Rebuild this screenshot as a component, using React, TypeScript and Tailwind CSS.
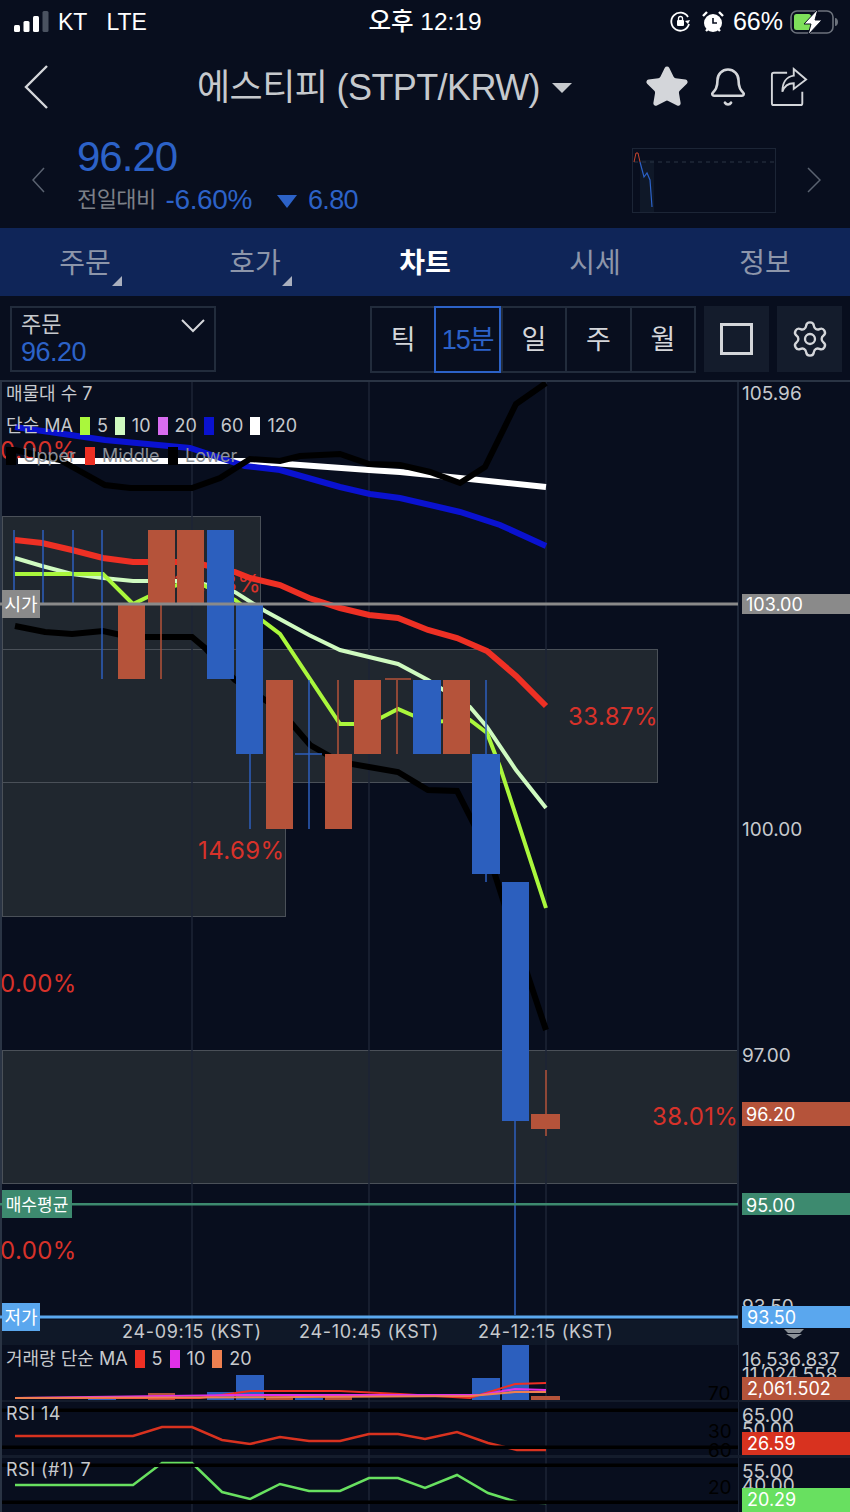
import { Bell, Settings, Star } from "lucide-react";

const BLUE = "#2c5fbe";
const RED = "#b5533a";

const tabs = ["주문", "호가", "차트", "시세", "정보"];
const periods = ["틱", "15분", "일", "주", "월"];

// [left, right, top, bottom, color]
const bodies: [number, number, number, number, string][] = [
    [118, 145, 604, 679, RED],
    [148, 175, 530, 604, RED],
    [177, 204, 530, 604, RED],
    [207, 234, 530, 679, BLUE],
    [236, 263, 604, 754, BLUE],
    [266, 293, 680, 829, RED],
    [325, 352, 754, 829, RED],
    [354, 381, 680, 754, RED],
    [413, 441, 680, 754, BLUE],
    [443, 470, 680, 754, RED],
    [472, 500, 754, 874, BLUE],
    [502, 529, 882, 1121, BLUE],
    [531, 560, 1114, 1129, RED],
];

// [x, top, bottom, color]
const wicks: [number, number, number, string][] = [
    [14, 530, 604, BLUE],
    [43, 530, 604, BLUE],
    [73, 530, 604, BLUE],
    [102, 530, 679, BLUE],
    [161, 604, 679, RED],
    [250, 754, 829, BLUE],
    [309, 680, 829, BLUE],
    [338, 680, 754, RED],
    [397, 680, 754, RED],
    [486, 680, 754, BLUE],
    [486, 874, 882, BLUE],
    [515, 1121, 1315, BLUE],
    [546, 1070, 1136, RED],
];

const volBars: [number, number, number, string][] = [
    [88, 116, 1396, BLUE],
    [148, 175, 1393, RED],
    [207, 234, 1392, BLUE],
    [236, 264, 1375, BLUE],
    [266, 293, 1398, RED],
    [295, 323, 1398, BLUE],
    [325, 352, 1397, RED],
    [472, 500, 1378, BLUE],
    [502, 529, 1345, BLUE],
    [531, 560, 1396, RED],
];

const lines = {
    white: "18,461 245,461 300,465 369,470 400,472 460,478 546,487",
    blue: "15,427 105,440 190,448 245,466 280,470 340,487 370,494 400,498 460,512 500,525 546,546",
    upper: "15,450 60,460 105,485 130,488 192,488 220,478 250,459 280,461 300,456 340,454 369,464 400,465 430,472 460,483 485,467 516,404 546,383",
    middle: "15,540 42,543 72,550 103,558 133,562 192,562 235,572 250,578 280,585 309,598 340,608 369,615 398,618 428,630 457,638 487,651 516,676 546,706",
    ma10: "15,558 42,566 72,574 103,578 133,581 192,581 235,592 265,611 309,635 340,650 369,657 398,664 428,680 470,707 487,727 516,770 546,808",
    ma5: "15,574 103,574 133,604 162,590 192,580 235,600 280,634 340,724 369,724 398,709 428,722 470,720 487,733 500,767 546,908",
    lower: "15,626 45,632 72,634 103,631 130,637 192,637 205,648 235,680 280,710 310,745 340,762 369,767 398,772 428,790 457,791 487,850 516,940 546,1030",
    volRed: "15,1398 200,1398 250,1391 340,1391 400,1394 470,1398 515,1384 546,1383",
    volPink: "15,1398 240,1395 480,1395 515,1389 546,1390",
    volOrange: "15,1398 300,1397 470,1396 515,1392 546,1392",
    rsi: "15,1436 133,1436 162,1427 192,1427 222,1440 250,1444 280,1437 309,1441 340,1441 369,1434 398,1434 425,1439 457,1432 488,1443 517,1450 546,1450",
    rsi1: "15,1485 133,1485 162,1463 192,1463 222,1492 250,1499 280,1484 309,1491 340,1491 369,1478 398,1478 425,1488 457,1475 488,1493 517,1502 546,1503",
};

const StatusBar = () => (
    <div className="flex h-[44px] items-center justify-between pl-[14px] pr-[12px] text-white">
        <div className="flex w-[288px] items-center">
            <svg width="36" height="24" viewBox="0 0 36 24">
                <rect x="0" y="15" width="6" height="7" rx="1.5" fill="#fff" />
                <rect x="9.5" y="11" width="6" height="11" rx="1.5" fill="#fff" />
                <rect x="19" y="6" width="6" height="16" rx="1.5" fill="#fff" />
                <rect x="28.5" y="1" width="6" height="21" rx="1.5" fill="#4a5260" />
            </svg>
            <span className="ml-[8px] text-[23px]">KT</span>
            <span className="ml-[19px] text-[23px]">LTE</span>
        </div>
        <span className="text-[24.5px] font-medium">오후 12:19</span>
        <div className="flex w-[290px] items-center justify-end">
            <svg width="24" height="24" viewBox="0 0 24 24" fill="none" stroke="#fff" strokeWidth="1.8">
                <path d="M20 14a9 9 0 1 1-1-7" />
                <path d="M21 10l-2 4-3-3" fill="#fff" stroke="none" />
                <rect x="8" y="10" width="7" height="6" rx="1" fill="#fff" stroke="none" />
                <path d="M9.5 10V8.5a2 2 0 0 1 4 0V10" strokeWidth="1.3" />
            </svg>
            <svg className="ml-[8px]" width="24" height="24" viewBox="0 0 24 24">
                <circle cx="12" cy="13" r="9" fill="#fff" />
                <path d="M12 8v5h4" stroke="#080e1e" strokeWidth="1.6" fill="none" />
                <path d="M2 6l4-4M22 6l-4-4M5 21l2-2M19 21l-2-2" stroke="#fff" strokeWidth="2.4" />
            </svg>
            <span className="ml-[8px] text-[25px]">66%</span>
            <svg className="ml-[7px]" width="48" height="26" viewBox="0 0 48 26">
                <rect x="1" y="2" width="42" height="22" rx="6" fill="none" stroke="#6c727c" strokeWidth="1.6" />
                <rect x="4" y="5" width="17" height="16" rx="2.5" fill="#7ee05a" />
                <path d="M45 9v8c2 0 3-2 3-4s-1-4-3-4z" fill="#6c727c" />
                <path d="M28 0L14 15h7l-3 11 14-15h-7l3-11z" fill="#fff" stroke="#080e1e" strokeWidth="1" />
            </svg>
        </div>
    </div>
);

const Header = () => (
    <div className="relative flex h-[86px] items-center justify-center">
        <svg className="absolute left-[24px] top-[21px]" width="26" height="44" viewBox="0 0 26 44" fill="none" stroke="#d4d6da" strokeWidth="2.4">
            <path d="M23 1L2 22l21 21" />
        </svg>
        <div className="flex items-center pr-[81px] pt-[1px]">
            <span className="text-[36px] tracking-[-0.6px] text-[#c6c9cd]">에스티피 (STPT/KRW)</span>
            <span className="ml-[12px] h-0 w-0 border-x-[10px] border-t-[10px] border-x-transparent border-t-[#c6c9cd]" />
        </div>
        <div className="absolute left-[644px] top-[20px] flex items-center">
            <Star size={46} fill="#d4d6da" stroke="#d4d6da" strokeWidth={1.5} />
            <Bell className="ml-[17px]" size={42} stroke="#d4d6da" strokeWidth={1.5} />
            <svg className="ml-[21px]" width="38" height="42" viewBox="0 0 40 42" fill="none" stroke="#d4d6da" strokeWidth="2">
                <path d="M18 6H4a2 2 0 0 0-2 2v30a2 2 0 0 0 2 2h28a2 2 0 0 0 2-2V26" />
                <path d="M25 2l13 11-13 10v-6c-6 0-10 3-12 9 0-9 4-16 12-17V2z" />
            </svg>
        </div>
    </div>
);

const PriceRow = () => (
    <div className="flex h-[98px] items-start">
        <svg className="ml-[32px] mt-[37px]" width="13" height="26" viewBox="0 0 13 26" fill="none" stroke="#5a6270" strokeWidth="1.5">
            <path d="M12 1L1 13l11 12" />
        </svg>
        <div className="ml-[32px]">
            <div className="mt-[1px] text-[42px] leading-[52px] tracking-[-1px] text-[#2c62c8]">96.20</div>
            <div className="mt-[2px] flex items-center leading-[30px]">
                <span className="text-[22px] tracking-[-0.6px] text-[#7c8088]">전일대비</span>
                <span className="ml-[10px] text-[28px] tracking-[-0.4px] text-[#2c62c8]">-6.60%</span>
                <span className="ml-[25px] mt-[2px] h-0 w-0 border-x-[10px] border-t-[13px] border-x-transparent border-t-[#2c62c8]" />
                <span className="ml-[11px] text-[27px] tracking-[-0.6px] text-[#2c62c8]">6.80</span>
            </div>
        </div>
        <div className="ml-[274px] mt-[18px] h-[65px] w-[144px] border border-[#1c2536]">
            <svg width="142" height="63" viewBox="0 0 142 63">
                <rect x="7" y="11" width="14" height="52" fill="#0f1828" />
                <path d="M1 13H142" stroke="#2a3444" strokeWidth="1" strokeDasharray="4 4" />
                <path d="M1 13L3 4h2l2 9" stroke="#c8452f" strokeWidth="1" fill="none" />
                <path d="M7 13l4 15 3-4 3 7 2 27" stroke="#2c62c8" strokeWidth="1.2" fill="none" />
            </svg>
        </div>
        <svg className="ml-[31px] mt-[37px]" width="14" height="26" viewBox="0 0 14 26" fill="none" stroke="#5a6270" strokeWidth="1.5">
            <path d="M1 1l12 12L1 25" />
        </svg>
    </div>
);

const Tabs = () => (
    <div className="grid h-[68px] grid-cols-5 bg-[#0f2558]">
        {tabs.map((tab, i) => (
            <div key={tab} className="relative flex items-center justify-center pt-[3px]">
                <span className={i === 2 ? "text-[28px] font-bold text-white" : "text-[28px] text-[#8d96aa]"}>{tab}</span>
                {i < 2 && (
                    <span className="absolute bottom-[10px] left-[112px] h-0 w-0 border-b-[10px] border-l-[10px] border-b-[#aab0be] border-l-transparent" />
                )}
            </div>
        ))}
    </div>
);

const Toolbar = () => (
    <div className="flex h-[84px] items-start pt-[10px]">
        <div className="relative ml-[10px] h-[66px] w-[206px] border-2 border-[#222c3c] pl-[9px] pt-[3px]">
            <div className="text-[22px] leading-[28px] text-[#c6c9cd]">주문</div>
            <div className="text-[27px] leading-[26px] tracking-[-0.5px] text-[#2c62c8]">96.20</div>
            <svg className="absolute left-[168px] top-[10px]" width="26" height="16" viewBox="0 0 26 16" fill="none" stroke="#d4d6da" strokeWidth="2">
                <path d="M2 2l11 11L24 2" />
            </svg>
        </div>
        <div className="ml-[154px] flex h-[67px] w-[326px] border-2 border-[#222c3c]">
            {periods.map((p, i) => (
                <div
                    key={p}
                    className={i === 1
                        ? "-my-[2px] flex min-w-0 flex-1 items-center justify-center border-2 border-[#2c62c8] pt-[2px] text-[27px] tracking-[-1px] text-[#2c62c8]"
                        : "flex min-w-0 flex-1 items-center justify-center border-l-2 border-[#222c3c] pt-[2px] text-[27px] text-[#d4d6da] first:border-l-0"}
                >
                    {p}
                </div>
            ))}
        </div>
        <div className="ml-[8px] flex h-[66px] w-[65px] items-center justify-center bg-[#141c2c]">
            <span className="h-[32px] w-[33px] border-[3px] border-[#d4d6da]" />
        </div>
        <div className="ml-[8px] flex h-[66px] w-[65px] items-center justify-center bg-[#141c2c]">
            <Settings size={40} stroke="#d4d6da" strokeWidth={1.4} />
        </div>
    </div>
);

const Chart = () => (
    <div className="relative flex-1 overflow-hidden border-t-2 border-[#2a3444] font-['Inter','Noto_Sans_CJK_KR',sans-serif] text-[#c6c9cd]">
        {/* zones */}
        <div className="absolute left-[2px] top-[134px] h-[134px] w-[259px] border border-[#4a5058] bg-[#20272f]" />
        <div className="absolute left-[2px] top-[267px] h-[134px] w-[656px] border border-[#4a5058] bg-[#20272f]" />
        <div className="absolute left-[2px] top-[400px] h-[135px] w-[284px] border border-[#4a5058] bg-[#20272f]" />
        <div className="absolute left-[2px] top-[668px] h-[134px] w-[736px] border border-[#4a5058] bg-[#20272f]" />
        <div className="absolute left-0 top-[938px] h-[25px] w-[738px] bg-[#0f1828]" />

        {/* percent labels */}
        <span className="absolute left-[0px] top-[54px] text-[24px] leading-[30px] tracking-[0.4px] text-[#d7322a]">0.00%</span>
        <span className="absolute left-[174px] top-[187px] text-[24px] leading-[30px] tracking-[0.4px] text-[#d7322a]">13.43%</span>
        <span className="absolute left-[568px] top-[320px] text-[24px] leading-[30px] tracking-[0.4px] text-[#d7322a]">33.87%</span>
        <span className="absolute left-[198px] top-[454px] text-[24px] leading-[30px] tracking-[0.4px] text-[#d7322a]">14.69%</span>
        <span className="absolute left-[0px] top-[587px] text-[24px] leading-[30px] tracking-[0.4px] text-[#d7322a]">0.00%</span>
        <span className="absolute left-[652px] top-[720px] text-[24px] leading-[30px] tracking-[0.4px] text-[#d7322a]">38.01%</span>
        <span className="absolute left-[0px] top-[854px] text-[24px] leading-[30px] tracking-[0.4px] text-[#d7322a]">0.00%</span>

        <svg className="absolute left-0 top-[-2px]" width="850" height="1132" viewBox="0 380 850 1132" fill="none">
            <rect x="0" y="380" width="2" height="1132" fill="#2a3444" />
            <rect x="737" y="380" width="2" height="1132" fill="#1c2536" />
            {[192, 369, 546].map(x => (
                <line key={x} x1={x} y1="382" x2={x} y2="1512" stroke="#1c2536" strokeWidth="1.5" />
            ))}
            <polyline points={lines.white} stroke="#fff" strokeWidth="6" />
            <polyline points={lines.blue} stroke="#0a12d0" strokeWidth="6" />
            <polyline points={lines.upper} stroke="#000" strokeWidth="6" />
            <polyline points={lines.lower} stroke="#000" strokeWidth="6" />
            <polyline points={lines.middle} stroke="#ee3024" strokeWidth="6" />
            <polyline points={lines.ma10} stroke="#cffac0" strokeWidth="4" />
            <polyline points={lines.ma5} stroke="#aaf73c" strokeWidth="4" />

            {wicks.map(([x, top, bottom, color]) => (
                <line key={`${x}-${top}`} x1={x} y1={top} x2={x} y2={bottom} stroke={color} strokeWidth="1.5" />
            ))}
            <line x1="295" y1="754" x2="322" y2="754" stroke={BLUE} strokeWidth="1.5" />
            <line x1="385" y1="679" x2="411" y2="679" stroke={RED} strokeWidth="1.5" />
            {bodies.map(([l, r, top, bottom, color]) => (
                <rect key={l} x={l} y={top} width={r - l} height={bottom - top} fill={color} />
            ))}

            {/* level lines */}
            <rect x="0" y="602.5" width="738" height="3" fill="#8a8a8a" />
            <rect x="0" y="1203" width="738" height="2.5" fill="#3d8a6f" />
            <rect x="0" y="1315.5" width="738" height="3" fill="#5aa7ee" />

            {/* lower panels */}
            <rect x="0" y="1345" width="738" height="167" fill="#080e1e" />
            <rect x="2" y="1400" width="848" height="2" fill="#141c2c" />
            <rect x="2" y="1455" width="848" height="3" fill="#141c2c" />
            {[192, 369, 546].map(x => (
                <line key={x} x1={x} y1="1345" x2={x} y2="1512" stroke="#1c2536" strokeWidth="1.5" />
            ))}
            <rect x="0" y="1345" width="2" height="167" fill="#2a3444" />
            {volBars.map(([l, r, top, color]) => (
                <rect key={l} x={l} y={top} width={r - l} height={1400 - top} fill={color} />
            ))}
            <polyline points={lines.volRed} stroke="#ee3024" strokeWidth="2" />
            <polyline points={lines.volPink} stroke="#e030e8" strokeWidth="2" />
            <polyline points={lines.volOrange} stroke="#ee8050" strokeWidth="2" />
            <polyline points={lines.rsi} stroke="#d8321f" strokeWidth="2.5" />
            <polyline points={lines.rsi1} stroke="#68e060" strokeWidth="2.5" />
            {[1410, 1447, 1465, 1502].map(y => (
                <rect key={y} x="2" y={y - 1.5} width="736" height="3.5" fill="#000" />
            ))}
            <path d="M784 1329h20l-4 4h-12zM786 1334h16l-8 5z" fill="#8a8f96" />
        </svg>

        {/* legends */}
        <span className="absolute left-[6px] top-[0px] text-[18px] leading-[24px]">매물대 수 7</span>
        <div className="absolute left-[6px] top-[32px] flex items-center text-[18px] leading-[24px]">
            <span>단순 MA</span>
            <span className="ml-[7px] h-[18px] w-[10px] bg-[#aaf73c]" />
            <span className="ml-[7px]">5</span>
            <span className="ml-[7px] h-[18px] w-[10px] bg-[#cffac0]" />
            <span className="ml-[7px]">10</span>
            <span className="ml-[7px] h-[18px] w-[10px] bg-[#d86cf0]" />
            <span className="ml-[7px]">20</span>
            <span className="ml-[7px] h-[18px] w-[10px] bg-[#0a12d0]" />
            <span className="ml-[7px]">60</span>
            <span className="ml-[7px] h-[18px] w-[10px] bg-white" />
            <span className="ml-[7px]">120</span>
        </div>
        <div className="absolute left-[6px] top-[62px] flex items-center text-[18px] leading-[24px] text-[#8a8f96]">
            <span className="h-[18px] w-[10px] bg-black" />
            <span className="ml-[7px] w-[62px]">Upper</span>
            <span className="h-[18px] w-[10px] bg-[#ee3024]" />
            <span className="ml-[7px] w-[66px]">Middle</span>
            <span className="h-[18px] w-[10px] bg-black" />
            <span className="ml-[7px]">Lower</span>
        </div>

        <span className="absolute left-[2px] top-[208px] h-[28px] w-[38px] bg-[#8a8a8a] text-center text-[18px] leading-[30px] text-white">시가</span>
        <span className="absolute left-[2px] top-[808px] h-[28px] w-[70px] bg-[#3d8a6f] text-center text-[17px] leading-[30px] text-white">매수평균</span>
        <span className="absolute left-[2px] top-[921px] h-[28px] w-[38px] bg-[#5aa7ee] text-center text-[18px] leading-[30px] text-white">저가</span>

        <span className="absolute left-[122px] top-[938px] text-[18px] leading-[24px] tracking-[0.7px]">24-09:15 (KST)</span>
        <span className="absolute left-[299px] top-[938px] text-[18px] leading-[24px] tracking-[0.7px]">24-10:45 (KST)</span>
        <span className="absolute left-[478px] top-[938px] text-[18px] leading-[24px] tracking-[0.7px]">24-12:15 (KST)</span>

        <div className="absolute left-[6px] top-[965px] flex items-center text-[18px] leading-[24px]">
            <span>거래량 단순 MA</span>
            <span className="ml-[7px] h-[18px] w-[10px] bg-[#ee3024]" />
            <span className="ml-[7px]">5</span>
            <span className="ml-[7px] h-[18px] w-[10px] bg-[#e030e8]" />
            <span className="ml-[7px]">10</span>
            <span className="ml-[7px] h-[18px] w-[10px] bg-[#ee8050]" />
            <span className="ml-[7px]">20</span>
        </div>
        <span className="absolute left-[6px] top-[1020px] text-[18px] leading-[24px] tracking-[0.5px]">RSI 14</span>
        <span className="absolute left-[6px] top-[1076px] text-[18px] leading-[24px] tracking-[0.5px]">RSI (#1) 7</span>

        {/* black rsi band values */}
        <span className="absolute left-[708px] top-[1000px] text-[19px] leading-[24px] text-black">70</span>
        <span className="absolute left-[708px] top-[1038px] text-[19px] leading-[24px] text-black">30</span>
        <span className="absolute left-[708px] top-[1057px] text-[19px] leading-[24px] text-black">60</span>
        <span className="absolute left-[708px] top-[1094px] text-[19px] leading-[24px] text-black">20</span>

        {/* price axis */}
        <span className="absolute left-[742px] top-[0px] text-[19px] leading-[24px]">105.96</span>
        <span className="absolute left-[742px] top-[436px] text-[19px] leading-[24px]">100.00</span>
        <span className="absolute left-[742px] top-[662px] text-[19px] leading-[24px]">97.00</span>
        <span className="absolute left-[742px] top-[913px] text-[19px] leading-[24px]">93.50</span>
        <span className="absolute left-[742px] top-[212px] h-[20px] w-[108px] bg-[#8a8a8a] pl-[4px] text-[18px] leading-[22px] text-white">103.00</span>
        <span className="absolute left-[742px] top-[720px] h-[24px] w-[108px] bg-[#b5533a] pl-[4px] text-[18px] leading-[26px] text-white">96.20</span>
        <span className="absolute left-[742px] top-[811px] h-[22px] w-[108px] bg-[#3d8a6f] pl-[4px] text-[18px] leading-[26px] text-white">95.00</span>
        <span className="absolute left-[742px] top-[924px] h-[22px] w-[108px] bg-[#5aa7ee] pl-[5px] text-[18px] leading-[24px] text-white">93.50</span>

        <span className="absolute left-[742px] top-[966px] text-[19px] leading-[24px]">16,536.837</span>
        <span className="absolute left-[742px] top-[981px] text-[19px] leading-[24px]">11,024.558</span>
        <span className="absolute left-[742px] top-[995px] h-[23px] w-[108px] bg-[#b5533a] pl-[5px] text-[18px] leading-[23px] text-white">2,061.502</span>
        <span className="absolute left-[742px] top-[1022px] text-[19px] leading-[24px]">65.00</span>
        <span className="absolute left-[742px] top-[1036px] text-[19px] leading-[24px]">50.00</span>
        <span className="absolute left-[742px] top-[1050px] h-[23px] w-[108px] bg-[#d8321f] pl-[5px] text-[18px] leading-[23px] text-white">26.59</span>
        <span className="absolute left-[742px] top-[1078px] text-[19px] leading-[24px]">55.00</span>
        <span className="absolute left-[742px] top-[1092px] text-[19px] leading-[24px]">40.00</span>
        <span className="absolute left-[742px] top-[1106px] h-[24px] w-[108px] bg-[#68e060] pl-[5px] text-[18px] leading-[24px] text-white">20.29</span>
    </div>
);

const App = () => (
    <div className="flex h-[1512px] w-[850px] flex-col overflow-hidden bg-[#080e1e] font-['Liberation_Sans','Noto_Sans_CJK_KR',sans-serif]">
        <StatusBar />
        <Header />
        <PriceRow />
        <Tabs />
        <Toolbar />
        <Chart />
    </div>
);

export default App;
